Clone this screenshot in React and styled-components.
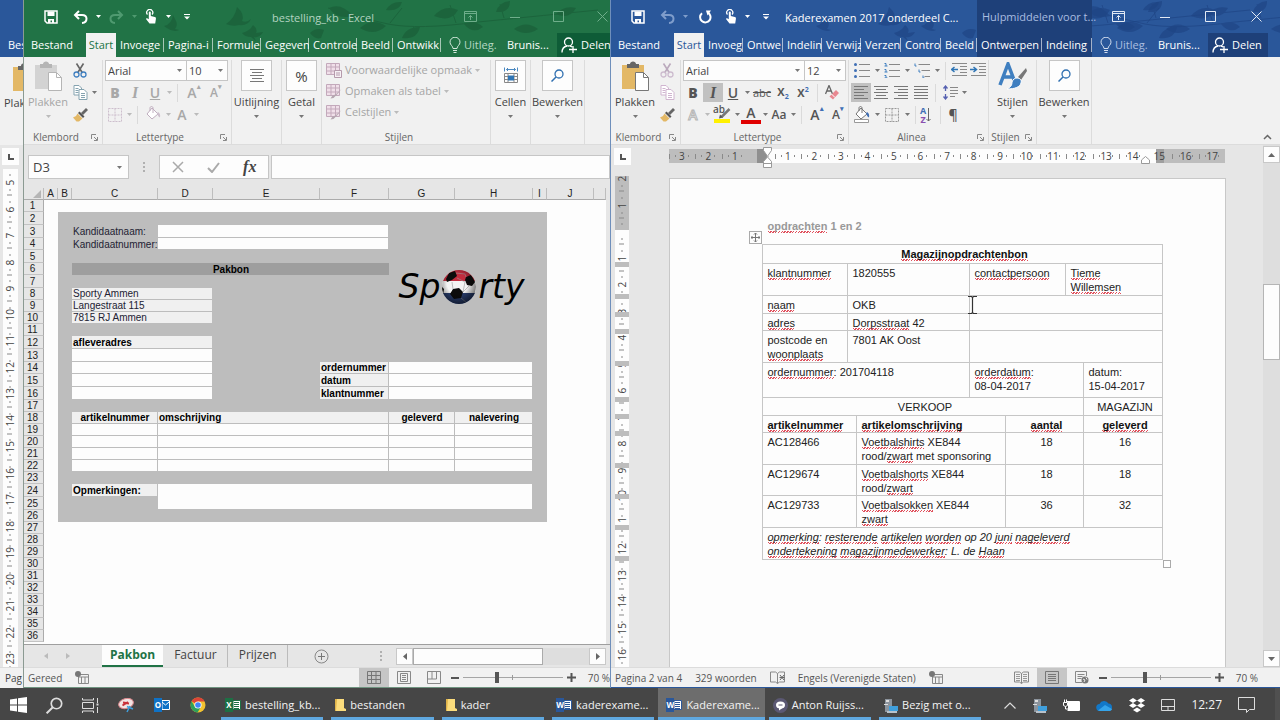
import React from 'react';
import styled, { createGlobalStyle, css } from 'styled-components';

const EXCEL = '#217346';
const WORD = '#2a579a';

/* ---------- data ---------- */

const excelTabs = [
	['Invoege', 48],
	['Pagina-i', 49],
	['Formule', 48],
	['Gegeven', 48],
	['Controle', 48],
	['Beeld', 36],
	['Ontwikk', 48],
];

const wordTabs = [
	['Invoeg', 39],
	['Ontwe', 40],
	['Indelin', 39],
	['Verwijz', 39],
	['Verzen', 40],
	['Contro', 40],
	['Beeld', 36],
];

const columns = [
	['A', 14],
	['B', 14],
	['C', 86],
	['D', 55],
	['E', 107],
	['F', 69],
	['G', 66],
	['H', 78],
	['I', 14],
	['J', 47],
];

// cells between column B and I: [kind, colSpan, text, options]
const sheetRows = {
	2: [['fill', 4], ['fill', 2, 'logo', { rows: 12 }]],
	3: [['fill', 1, 'Kandidaatnaam:'], ['box', 3]],
	4: [['fill', 1, 'Kandidaatnummer:'], ['box', 3]],
	5: [['fill', 4]],
	6: [['title', 4, 'Pakbon', { bold: true, center: true }]],
	7: [['fill', 4]],
	8: [['head', 2, 'Sporty Ammen'], ['fill', 2]],
	9: [['head', 2, 'Langestraat 115'], ['fill', 2]],
	10: [['head', 2, '7815 RJ Ammen'], ['fill', 2]],
	11: [['fill', 4]],
	12: [['head', 2, 'afleveradres', { bold: true }], ['fill', 2]],
	13: [['box', 2], ['fill', 2]],
	14: [['box', 2], ['fill', 1], ['head', 1, 'ordernummer', { bold: true }], ['box', 2]],
	15: [['box', 2], ['fill', 1], ['head', 1, 'datum', { bold: true }], ['box', 2]],
	16: [['box', 2], ['fill', 1], ['head', 1, 'klantnummer', { bold: true }], ['box', 2]],
	17: [['fill', 6]],
	18: [
		['head', 1, 'artikelnummer', { bold: true, center: true }],
		['head', 3, 'omschrijving', { bold: true }],
		['head', 1, 'geleverd', { bold: true, center: true }],
		['head', 1, 'nalevering', { bold: true, center: true }],
	],
	19: [['box', 1], ['box', 3], ['box', 1], ['box', 1]],
	20: [['box', 1], ['box', 3], ['box', 1], ['box', 1]],
	21: [['box', 1], ['box', 3], ['box', 1], ['box', 1]],
	22: [['box', 1], ['box', 3], ['box', 1], ['box', 1]],
	23: [['fill', 6]],
	24: [['head', 1, 'Opmerkingen:', { bold: true }], ['box', 5, '', { rows: 2 }]],
	25: [['fill', 1]],
	26: [['fill', 6]],
};

const tallRows = [2, 3, 5, 7, 12, 13, 15, 16, 24, 25];

const rulerMarks = [262, 294, 312, 329, 361, 397, 414, 431, 463, 494, 525, 556];

/* ---------- icons ---------- */

const Svg = ({ w = 16, h = w, box, children, ...rest }) => (
	<svg width={w} height={h} viewBox={box || `0 0 ${w} ${h}`} fill='none' aria-hidden='true' {...rest}>
		{children}
	</svg>
);

const Caret = ({ color = '#777' }) => (
	<Svg w={5} h={3}>
		<path d='M0 0h5L2.5 3z' fill={color} />
	</Svg>
);

const SaveIcon = () => (
	<Svg w={14}>
		<path d='M1 1h12v12H3L1 11z' stroke='#fff' strokeWidth='1.5' />
		<path d='M3.5 1.500h7v4.500h-7zM4 9h6v4H8V10.500H6.500V13H4z' fill='#fff' />
	</Svg>
);

const UndoIcon = ({ color = '#fff', flip }) => (
	<Svg w={15} h={14} transform={flip ? 'scale(-1 1)' : undefined}>
		<path d='M6 1 2 5l4 4M2.500 5H9c6 0 6 7.500 0 8' stroke={color} strokeWidth='2' />
	</Svg>
);

const RedoIcon = () => (
	<Svg w={14}>
		<path d='M4 3.200A5.200 5.200 0 1 0 9.500 2.500' stroke='#fff' strokeWidth='2' />
		<path d='M8 .5h5l-3.500 5z' fill='#fff' />
	</Svg>
);

const TouchIcon = () => (
	<Svg w={12} h={15}>
		<path d='M2.500 5.500a3 3 0 1 1 4.500 0' stroke='#fff' strokeWidth='1.300' />
		<path d='M3.800 3.500c0-1.300 2-1.300 2 0V7l4 1c1.200.4 1.200 1 1.100 2l-.7 4.500H4.500L1 10c0-1.300 1.500-1 2.800.3z' fill='#fff' />
	</Svg>
);

const CustomizeIcon = () => (
	<Svg w={6} h={6}>
		<path d='M0 .5h6' stroke='#fff' />
		<path d='M0 2.500h6l-3 3z' fill='#fff' />
	</Svg>
);

const WindowIcons = ({ color }) => (
	<>
		<WindowButton aria-label='Lintweergave'>
			<Svg w={13} h={11}>
				<path d='M.5.5h12v10H.5zM.5 2.500h12M6.500 9V4.500M4.500 6.500l2-2 2 2' stroke={color} />
			</Svg>
		</WindowButton>
		<WindowButton aria-label='Minimaliseren'>
			<Svg w={10} h={10}>
				<path d='M0 5.500h10' stroke={color} />
			</Svg>
		</WindowButton>
		<WindowButton aria-label='Maximaliseren'>
			<Svg w={11} h={11}>
				<path d='M.5.500h10v10H.5z' stroke={color} />
			</Svg>
		</WindowButton>
		<WindowButton aria-label='Sluiten'>
			<Svg w={11} h={11}>
				<path d='m.5.5 10 10M10.500.5l-10 10' stroke={color} />
			</Svg>
		</WindowButton>
	</>
);

const BulbIcon = ({ color }) => (
	<Svg w={12} h={16}>
		<path d='M4 11.500C4 9 1 8 1 5.200a5 5 0 0 1 10 0C11 8 8 9 8 11.500zM4 13.500h4M4.500 15.500h3' stroke={color} />
	</Svg>
);

const ShareIcon = () => (
	<Svg w={16}>
		<circle cx='7.500' cy='5' r='4' stroke='#fff' strokeWidth='1.300' />
		<path d='M1 15.500c0-4 2.500-6 5-6.500M9 9c1 .2 1.500.6 2 1M8 12.500h8M12 9v7' stroke='#fff' strokeWidth='1.300' />
	</Svg>
);

const PasteIcon = ({ faded }) => (
	<Svg w={28} h={30}>
		<path d='M1 4h22v24H1z' fill={faded ? '#d3d3d3' : '#e3b866'} />
		<path d='M6 3h3c0-3.500 6-3.500 6 0h3v4H6z' fill={faded ? '#b5b5b5' : '#666'} />
		<path d='M14.500 11.500h8l5 5v13h-13z' fill='#fff' stroke={faded ? '#b5b5b5' : '#777'} />
		<path d='M22.500 11.500v5h5' stroke={faded ? '#b5b5b5' : '#777'} />
	</Svg>
);

const CutIcon = ({ faded }) => (
	<Svg w={14} h={15}>
		<path d='M3.500.5 9.500 10M10.500.5 4.500 10' stroke={faded ? '#bbaabd' : '#666'} strokeWidth='1.600' />
		<circle cx='3.500' cy='11.500' r='2.500' stroke={faded ? '#cdbccf' : '#3f7fc0'} strokeWidth='1.300' />
		<circle cx='10.500' cy='11.500' r='2.500' stroke={faded ? '#cdbccf' : '#3f7fc0'} strokeWidth='1.300' />
	</Svg>
);

const CopyIcon = ({ color }) => (
	<Svg w={15} h={15}>
		<path d='M1 .5h5l2.500 2.500v7H1z' fill='#fff' stroke={color} />
		<path d='M2.500 3.500h3M2.500 5.500h3M2.500 7.500h3' stroke={color} />
		<path d='M6 4.500h5l3 3v7H6z' fill='#fff' stroke={color} />
		<path d='M8 8.500h4M8 10.500h4M8 12.500h4' stroke={color} />
	</Svg>
);

const BrushIcon = () => (
	<Svg w={15} h={14}>
		<path d='m8 5 5-5 2 2-5 5z' fill='#666' />
		<path d='m6.500 3.500 5 5-1.500 1.500-5-5z' fill='#555' />
		<path d='m4.500 5.500 5 5L6 13.500H3.500L0 9.500 3 8z' fill='#e3b866' />
	</Svg>
);

const BordersIcon = ({ color }) => (
	<Svg w={14}>
		<path d='M.5.5h13v13H.5zM7 .5v13M.5 7h13' stroke={color} strokeDasharray='2 1' />
	</Svg>
);

const BucketIcon = ({ color, drop, bar }) => (
	<Svg w={16} h={17}>
		<path d='m7 2 6 6-6 5-5-5z' fill='#fff' stroke={color} />
		<path d='M5 5V2c0-2 3-2 3 0v5' stroke={color} />
		<path d='M13 6c2 1 2.500 3 2 5.500-2-.500-2-3-3-4z' fill={drop} />
		{bar && <path d='M.5 13.500h14v3H.5z' fill='#fff' stroke='#999' />}
	</Svg>
);

const LinesIcon = ({ rows, color = '#777', h = 14, w = 14 }) => (
	<Svg w={w} h={h}>
		{rows.map(([x1, x2], i) => (
			<path key={i} d={`M${x1} ${i * 3 + 0.5}H${x2}`} stroke={color} />
		))}
	</Svg>
);

const ListIcon = ({ kind }) => (
	<Svg w={16} h={15}>
		{[1.5, 7.5, 13.5].map((y, i) => (
			<React.Fragment key={y}>
				{kind === 'bullets' && <circle cx='1.500' cy={y} r='1.500' fill='#3f6fb5' />}
				{kind === 'numbers' && <path d={`M.5 ${y - 1}h1.500v2.500M.5 ${y + 1.5}h3`} stroke='#3f7fc0' />}
				{kind === 'levels' && <path d={`M${1 + i * 4} ${y - 1}v2.500h1.500`} stroke='#3f7fc0' />}
				<path d={`M${kind === 'levels' ? 4.5 + i * 3 : 5} ${y}H16`} stroke='#888' />
			</React.Fragment>
		))}
	</Svg>
);

const IndentIcon = ({ right }) => (
	<Svg w={16} h={15}>
		<path d='M1 .5h15M9 3.500h7M9 6.500h7M9 9.500h7M1 12.500h15' stroke='#8a8a8a' />
		<path d={right ? 'M0 6.500h6M3.500 4l3 2.500-3 2.500' : 'M1 6.500h6M3.500 4l-3 2.500 3 2.500'} stroke='#2f75b5' strokeWidth='1.500' />
	</Svg>
);

const SpacingIcon = () => (
	<Svg w={15} h={15}>
		<path d='M2.500 1v5M.5 3.500l2-2.500 2 2.500M2.500 9v5M.5 11.500l2 2.500 2-2.500' stroke='#5560b0' strokeWidth='1.300' />
		<path d='M7 2.500h8M7 5.500h8M7 8.500h8M7 11.500h5' stroke='#888' />
	</Svg>
);

const EraserIcon = () => (
	<Svg w={14} h={15}>
		<path d='M.5 9 4 .500 7.500 9M2 6h4' stroke='#666' strokeWidth='1.300' />
		<path d='m11 5 3 3-6 6.500-3.500-3z' fill='#e88790' />
		<path d='m6.500 9 3.500 3.500' stroke='#fff' />
	</Svg>
);

const MarkerPen = () => (
	<Svg w={17} h={17}>
		<path d='m15.500 3-8 8' stroke='#777' strokeWidth='2.500' />
		<path d='m5 12.500 4-1-3-3z' fill='#555' />
		<path d='M0 13h16v4H0z' fill='#fff100' />
	</Svg>
);

const StyleRowIcon = ({ pen }) => (
	<Svg w={16} h={15}>
		<path d='M.5.5h13v11H.5z' fill='#f0dfe9' stroke='#c3a9bb' />
		<path d='M.5 4h13M.5 8h13M5 .5v11M9.500.5v11' stroke='#c3a9bb' />
		{pen ? (
			<path d='m15.500 5-5 6-3 3-3 .5 2-3 3-1z' fill='#b5a6b0' />
		) : (
			<path d='M8.500 7.500h7v7h-7zM10 10h4M10 12h4' fill='#f6f0f4' stroke='#b59aac' />
		)}
	</Svg>
);

const MagnifierIcon = ({ color = '#2f6fb0', size = 13 }) => (
	<Svg w={size} box='0 0 13 13'>
		<circle cx='8' cy='5' r='4' stroke={color} strokeWidth='1.300' />
		<path d='m5 8-4.500 4.500' stroke={color} strokeWidth='1.500' />
	</Svg>
);

const CellsIcon = () => (
	<Svg w={16} h={17}>
		<path d='M1.500.5v4M14.500.5v4M3.500 2.500h9M5 1 3.500 2.500 5 4M11 1l1.500 1.500L11 4' stroke='#4a88c0' />
		<path d='M1.500 6.500h13v9h-13zM1.500 9.500h13M1.500 12.500h13M5 6.500v9M11 6.500v9' stroke='#888' />
		<path d='M5 8.500h6v5H5z' fill='#2f75b5' />
	</Svg>
);

const StylesIcon = () => (
	<Svg w={30} h={28}>
		<path d='M2 23 10 2l8 21M5 15h10' stroke='#3f7fc0' strokeWidth='3.500' />
		<path d='m28 6-8 9 3 3 6-9z' fill='#777' />
		<path d='M19 16c3 0 5 2 4 5-1 4-6 6-14 6 4-2 5-4 5-7 1-3 3-4 5-4z' fill='#3f7fc0' stroke='#fff' />
	</Svg>
);

const LauncherIcon = ({ color = '#888' }) => (
	<Svg w={7} h={7}>
		<path d='M.5 5V.5H5M3 3l3 3M6.500 3v3.500H3' stroke={color} />
	</Svg>
);

const MacroIcon = () => (
	<Svg w={14} h={13}>
		<path d='M3.500 3.500h10v9h-10zM3.500 6h10M6.500 6v6M10 6v6' stroke='#888' />
		<circle cx='3' cy='3' r='3' fill='#777' />
	</Svg>
);

const GridViewIcon = () => (
	<Svg w={14} h={13}>
		<path d='M.5.5h13v12H.5zM.5 4.500h13M.5 8.500h13M4.500.5v12M9 .5v12' stroke='#777' />
	</Svg>
);

const PageViewIcon = () => (
	<Svg w={14} h={13}>
		<path d='M.5.5h13v12H.5zM3.500 2.500h7v8h-7zM5 4.500h4M5 6.500h4M5 8.500h4' stroke='#888' />
	</Svg>
);

const BreakViewIcon = () => (
	<Svg w={14} h={13}>
		<path d='M.5.5h13v12H.5zM.5 8h9V.5M5 .5V8' stroke='#888' />
	</Svg>
);

const BookIcon = ({ mark }) => (
	<Svg w={15} h={13}>
		<path d='M.5 1h5l2 1.500L9.500 1h5v10h-5l-2 1.500-2-1.500h-5zM7.500 2.500v10' stroke='#888' />
		{mark ? (
			<path d='m10 4 4 5M14 4l-4 5M9.500 6.500h5' stroke='#666' />
		) : (
			<path d='M2 3.500h4M2 5.500h4M2 7.500h4M2 9.500h4M9 3.500h4M9 5.500h4M9 7.500h4M9 9.500h4' stroke='#999' />
		)}
	</Svg>
);

const PrintViewIcon = () => (
	<Svg w={14} h={13}>
		<path d='M.5.5h13v12H.5zM3 3.500h8M3 5.500h8M3 7.500h8M3 9.500h8' stroke='#777' />
	</Svg>
);

const WebViewIcon = () => (
	<Svg w={14} h={13}>
		<path d='M7 11.500H.5V.5h11V5M2.500 3.500h7M2.500 5.500h5M2.500 7.500h4' stroke='#888' />
		<circle cx='10' cy='9' r='3.500' fill='#777' />
		<path d='m8 8 2 1-1 2M11 6.500l1 2' stroke='#eee' />
	</Svg>
);

const Football = () => (
	<Svg w={36} h={36}>
		<defs>
			<clipPath id='ball'>
				<circle cx='18' cy='18' r='17' />
			</clipPath>
			<radialGradient id='shade' cx='.45' cy='.4' r='.6'>
				<stop offset='.5' stopColor='#000' stopOpacity='0' />
				<stop offset='1' stopColor='#000' stopOpacity='.55' />
			</radialGradient>
		</defs>
		<g clipPath='url(#ball)'>
			<path d='M0 0h36v12H0z' fill='#c22c3e' />
			<path d='M0 12h36v12H0z' fill='#f4f4f4' />
			<path d='M0 24h36v12H0z' fill='#2a3f70' />
			<path d='m5 10 3-6 6-2 2 5-5 4-5 2zM25 8l5-2 4 7-3 4-5-1-2-5zM12 20l6-1 4 4-2 6-7 1-4-5zM0 17l3 3-1 6-3-2z' fill='#0c0c0c' />
			<path d='m16 9 8 4-2 10M11 13l1 7M15 4l9 1 1 3M22 23l7-7M20 29l6 5' stroke='#999' strokeWidth='.6' />
			<circle cx='18' cy='18' r='17' fill='url(#shade)' />
		</g>
	</Svg>
);

const WindowsLogo = () => (
	<Svg w={17} h={16}>
		<path d='M0 2.500 7 1.500v6H0zM8 1.300 17 0v7.500H8zM0 8.500h7v6l-7-1zM8 8.500h9V16l-9-1.300z' fill='#fff' />
	</Svg>
);

const TaskViewIcon = () => (
	<Svg w={17} h={15}>
		<path d='M.5 4.500h11v6H.5zM.5 0v2h11V0M.5 15v-2h11v2M15.500 0v5M15.500 9v6' stroke='#ddd' />
		<path d='M14.500 5.500h2v2h-2z' fill='#ddd' />
	</Svg>
);

const SnipIcon = () => (
	<Svg w={16} h={15}>
		<ellipse cx='8' cy='5.500' rx='7.500' ry='5' fill='#f2e4e4' stroke='#d9888c' transform='rotate(-15 8 5.500)' />
		<path d='M4.500 7.500 10 4M5 4.500l6 1' stroke='#c9303a' strokeWidth='2' />
		<path d='M9 8.500 15 11M9 14l3-6' stroke='#3f9fdc' strokeWidth='1.500' />
	</Svg>
);

const LetterIcon = ({ letter, color, accent, mail }) => (
	<LetterBox $color={color}>
		<b>{letter}</b>
		<Svg w={8} h={12}>
			<path d='M0 1.500h7.500v9H0z' fill={mail ? accent : '#fff'} stroke={mail ? '#fff' : color} />
			{mail ? (
				<path d='m0 3 3.500 3L7 3' stroke='#fff' />
			) : (
				<path d='M1 3.500h5M1 5.500h5M1 7.500h5M1 9.500h5' stroke={color} />
			)}
		</Svg>
	</LetterBox>
);

const ChromeIcon = () => (
	<Svg w={16}>
		<circle cx='8' cy='8' r='7.500' fill='#f2c230' />
		<path d='M8 8 1.500 4.250A7.500 7.500 0 0 1 14.700 4.500H8z' fill='#dc4437' />
		<path d='M1.500 4.250A7.500 7.500 0 0 0 7.500 15.500L11 9.800 8 8 4.800 9.500z' fill='#2da05a' />
		<circle cx='8' cy='8' r='3.600' fill='#fff' />
		<circle cx='8' cy='8' r='2.800' fill='#4285f4' />
	</Svg>
);

const FolderIcon = () => (
	<Svg w={11} h={14}>
		<path d='M0 1h5v12H0z' fill='#e0b44a' />
		<path d='M2 1h7v9l2 1v2H1z' fill='#fbdc7c' />
	</Svg>
);

const ChatIcon = () => (
	<Svg w={15}>
		<circle cx='7.500' cy='7.500' r='7.500' fill='#5b5873' />
		<ellipse cx='7.500' cy='7' rx='4.500' ry='3.500' fill='#fff' />
		<path d='M6 9.500v3l3.500-2.500z' fill='#fff' />
		<path d='M5.500 7h4' stroke='#5b5873' />
	</Svg>
);

const DeviceIcon = () => (
	<Svg w={15} h={15}>
		<path d='M2 1h7v13H2z' fill='#8b939c' />
		<path d='M3 2h3v2H3zM1 6h4v1H1z' fill='#ddd' />
		<path d='M6 8h9v5H6z' fill='#3f9fdc' />
		<path d='M4 13h10v2H4z' fill='#b8c2cb' />
	</Svg>
);

const BatteryIcon = () => (
	<Svg w={17} h={12}>
		<path d='M5 3h11v8H5z' fill='#fff' />
		<path d='M4 2.500h12.500v9h-12M16.500 5v4M.5 3.500h4v3l-2 1-2-1zM1.500 3V.5M3.500 3V.5M2.500 7.500V10H5' stroke='#fff' />
	</Svg>
);

const CloudIcon = () => (
	<Svg w={17} h={11}>
		<path d='M4 11a3.500 3.500 0 0 1-.5-7A5 5 0 0 1 12.500 3.500 3.800 3.800 0 0 1 13 11z' fill='#1278c8' />
		<path d='M2 10.500 9 5l7 4c-.5 1.500-1.500 2-3 2H4z' fill='#35a4ea' />
	</Svg>
);

const DropboxIcon = () => (
	<Svg w={16} h={15}>
		<path d='m4 0 4 2.500L4 5 0 2.500zM12 0l4 2.500L12 5 8 2.500zM4 5l4 2.500L4 10 0 7.500zM12 5l4 2.500L12 10 8 7.500zM8 9.500l4 2.500-4 2.500L4 12z' fill='#fff' />
	</Svg>
);

// leaves and birds printed on the title bar
const Foliage = ({ color, ...rest }) => (
	<FoliageSvg viewBox='0 0 440 57' aria-hidden='true' {...rest}>
		<g fill={color}>
			<path d='M0 26q8-2 9-11l3 6q2 4-1 8l4 1q-6 3-15-4z' />
			<path d='M62 24q9-6 11-17 8 7 5 14 5 2 9-2-3 7-12 6-6 2-13-1z' />
			<path d='M78 33q8-2 11-8 5 4 3 8l7-1q-3 6-9 5l2 4-5-4q-6 0-9-4z' />
			<path d='M146 33q6-6 14-3l-3 8q-6 2-11-5zM165 8q12-6 24 8-16 4-24-8zM196 28q12-11 26-2-12 11-26 2zM222 10q5-9 16-8-3 10-16 8zM238 38q4-11 18-11-3 13-18 11zM270 16q10-12 24-6-7 13-24 6z' />
			<path d='M300 24q12-4 19 3-10 8-19-3zM332 12q3-10 14-11 0 12-14 11zM350 29q12-9 24 0-12 8-24 0zM392 14q8-9 20-6-7 12-20 6z' />
		</g>
		<path d='M164 8q30 10 60 16t90-2q40-4 120-12M226 23l12-15M250 27l-8 10M292 23l-6-18M340 18l-4-14' stroke={color} fill='none' />
	</FoliageSvg>
);

/* ---------- shared ribbon parts ---------- */

const BigButton = ({ icon, label, faded, boxed }) => (
	<Big $faded={faded}>
		<BigIcon $boxed={boxed}>{icon}</BigIcon>
		<span>{label}</span>
		<Caret color={faded ? '#bbb' : '#777'} />
	</Big>
);

const FontPicker = ({ size, widths }) => (
	<ToolRow>
		<Picker $width={widths[0]}>
			<select aria-label='Lettertype' defaultValue='Arial'>
				<option>Arial</option>
			</select>
			<Caret />
		</Picker>
		<Picker $width={widths[1]}>
			<select aria-label='Tekengrootte' defaultValue={size}>
				<option>{size}</option>
			</select>
			<Caret />
		</Picker>
	</ToolRow>
);

const Group = ({ width, label, launcher, children }) => (
	<GroupBox $width={width}>
		<GroupBody>{children}</GroupBody>
		<GroupLabel>
			<span>{label}</span>
			{launcher && (
				<Launcher aria-label={`${label} instellingen`}>
					<LauncherIcon />
				</Launcher>
			)}
		</GroupLabel>
	</GroupBox>
);

const Zoom = () => (
	<ZoomBox>
		<Svg w={8} h={8}>
			<path d='M0 4h8' stroke='#555' strokeWidth='2' />
		</Svg>
		<input type='range' aria-label='Zoomen' defaultValue='34' />
		<Svg w={9} h={9}>
			<path d='M0 4.500h9M4.500 0v9' stroke='#555' strokeWidth='2' />
		</Svg>
		<span>70 %</span>
	</ZoomBox>
);

/* ---------- Excel ---------- */

function ExcelRibbon() {
	return (
		<Ribbon>
			<Group width={79} label='Klembord' launcher>
				<BigButton icon={<PasteIcon faded />} label='Plakken' faded />
				<ToolColumn>
					<ToolRow>
						<Tool $width={20} aria-label='Knippen'><CutIcon /></Tool>
					</ToolRow>
					<ToolRow>
						<Tool $width={20} aria-label='Kopiëren'><CopyIcon color='#85a3b0' /></Tool>
						<Tool $width={8} aria-label='Kopieeropties'><Caret /></Tool>
					</ToolRow>
					<ToolRow>
						<Tool $width={20} aria-label='Opmaak kopiëren'><BrushIcon /></Tool>
					</ToolRow>
				</ToolColumn>
			</Group>
			<Group width={129} label='Lettertype' launcher>
				<ToolColumn>
					<FontPicker size='10' widths={[82, 41]} />
					<ToolRow>
						<Tool $width={20} $faded><b>B</b></Tool>
						<Tool $width={20} $faded><Serif>I</Serif></Tool>
						<Tool $width={20} $faded><u>U</u></Tool>
						<Tool $width={8} aria-label='Onderstreping'><Caret color='#bbb' /></Tool>
						<Divider />
						<Tool $width={24} $faded>A<sup>▴</sup></Tool>
						<Tool $width={20} $faded $small>A<sup>▾</sup></Tool>
					</ToolRow>
					<ToolRow>
						<Tool $width={20} aria-label='Randen'><BordersIcon color='#cdbfcd' /></Tool>
						<Tool $width={8} aria-label='Randopties'><Caret color='#bbb' /></Tool>
						<Divider />
						<Tool $width={22} aria-label='Opvulkleur'><BucketIcon color='#c0aebf' drop='#cdbfcd' /></Tool>
						<Tool $width={8} aria-label='Kleuropties'><Caret color='#bbb' /></Tool>
						<Tool $width={20} $faded>A</Tool>
						<Tool $width={8} aria-label='Tekstkleur'><Caret color='#bbb' /></Tool>
					</ToolRow>
				</ToolColumn>
			</Group>
			<Group width={50}>
				<BigButton boxed icon={<LinesIcon h={14} rows={[[0, 14], [2, 12], [0, 14], [2, 12], [0, 14]]} />} label='Uitlijning' />
			</Group>
			<Group width={40}>
				<BigButton boxed icon='%' label='Getal' />
			</Group>
			<Group width={169} label='Stijlen'>
				<ToolColumn>
					<StyleButton><StyleRowIcon />Voorwaardelijke opmaak<Caret color='#bbb' /></StyleButton>
					<StyleButton><StyleRowIcon pen />Opmaken als tabel<Caret color='#bbb' /></StyleButton>
					<StyleButton><StyleRowIcon pen />Celstijlen<Caret color='#bbb' /></StyleButton>
				</ToolColumn>
			</Group>
			<Group width={40}>
				<BigButton boxed icon={<CellsIcon />} label='Cellen' />
			</Group>
			<Group width={54}>
				<BigButton boxed icon={<MagnifierIcon />} label='Bewerken' />
			</Group>
		</Ribbon>
	);
}

function Sheet() {
	const rows = Array.from({ length: 36 }, (_, i) => i + 1);

	return (
		<SheetTable>
			<colgroup>
				<col width='20' />
				{columns.map(([name, width]) => (
					<col key={name} width={width} />
				))}
				<col />
			</colgroup>
			<thead>
				<tr>
					<HeadCell>
						<Svg w={8} h={8}>
							<path d='M8 0v8H0z' fill='#b5b5b5' />
						</Svg>
					</HeadCell>
					{columns.map(([name]) => (
						<HeadCell key={name}>{name}</HeadCell>
					))}
					<HeadCell />
				</tr>
			</thead>
			<tbody>
				{rows.map((row) => (
					<SheetRow key={row} $tall={tallRows.includes(row)}>
						<RowHead>{row}</RowHead>
						{sheetRows[row] ? (
							<>
								<Cell />
								<Cell $kind='fill' />
								{sheetRows[row].map(([kind, span, text, opt = {}], i) => (
									<Cell key={i} $kind={kind} colSpan={span} rowSpan={opt.rows} $bold={opt.bold} $center={opt.center}>
										{text === 'logo' ? (
											<Logo>
												<span>Sp</span>
												<Football />
												<span>rty</span>
											</Logo>
										) : (
											text
										)}
									</Cell>
								))}
								<Cell $kind='fill' />
								<Cell colSpan={2} />
							</>
						) : (
							<Cell colSpan={11} />
						)}
					</SheetRow>
				))}
			</tbody>
		</SheetTable>
	);
}

function Excel() {
	return (
		<ExcelWindow>
			<Header $color={EXCEL}>
				<Foliage color='#1a5f39' style={{ left: 140 }} />
				<TitleRow>
					<QuickAccess>
						<QuickButton $width={30} aria-label='Opslaan'><SaveIcon /></QuickButton>
						<QuickButton $width={28} aria-label='Ongedaan maken'><UndoIcon /></QuickButton>
						<QuickButton $width={8} aria-label='Geschiedenis'><Caret color='#fff' /></QuickButton>
						<QuickButton $width={28} aria-label='Opnieuw'><UndoIcon flip color='#4f9a70' /></QuickButton>
						<QuickButton $width={8} aria-label='Opnieuw opties'><Caret color='#4f9a70' /></QuickButton>
						<QuickButton $width={26} aria-label='Aanraakmodus'><TouchIcon /></QuickButton>
						<QuickButton $width={8} aria-label='Modus'><Caret color='#fff' /></QuickButton>
						<QuickButton $width={30} aria-label='Aanpassen'><CustomizeIcon /></QuickButton>
					</QuickAccess>
					<ExcelTitle>bestelling_kb - Excel</ExcelTitle>
					<WindowButtons $gap={33}>
						<WindowIcons color='#6fae8b' />
					</WindowButtons>
				</TitleRow>
				<TabRow>
					<FileTab>Bestand</FileTab>
					<StartTab $color={EXCEL}>Start</StartTab>
					{excelTabs.map(([name, width]) => (
						<Tab key={name} $width={width}>{name}</Tab>
					))}
					<Hint $color='#b5d8c4'><BulbIcon color='#d3e8dc' />Uitleg.</Hint>
					<Account>Brunis...</Account>
					<Share $color='#0e5c37'><ShareIcon />Delen</Share>
				</TabRow>
			</Header>
			<ExcelRibbon />
			<FormulaBar>
				<NameBox>
					<input aria-label='Naamvak' defaultValue='D3' />
					<Caret />
				</NameBox>
				<Dots><i /><i /><i /></Dots>
				<FormulaButtons>
					<button aria-label='Annuleren'>
						<Svg w={12} h={12}><path d='m1 1 10 10M11 1 1 11' stroke='#aaa' strokeWidth='1.500' /></Svg>
					</button>
					<button aria-label='Invoeren'>
						<Svg w={13} h={11}><path d='m1 6 4 4 7-9' stroke='#aaa' strokeWidth='2' /></Svg>
					</button>
					<button aria-label='Functie invoegen'><Serif>fx</Serif></button>
				</FormulaButtons>
				<FormulaInput aria-label='Formule' />
			</FormulaBar>
			<SheetArea>
				<Sheet />
			</SheetArea>
			<SheetTabs>
				<SheetNav>
					<Svg w={4} h={6}><path d='M4 0v6L0 3z' fill='#bbb' /></Svg>
					<Svg w={4} h={6}><path d='M0 0v6l4-3z' fill='#bbb' /></Svg>
				</SheetNav>
				<SheetTab $active>Pakbon</SheetTab>
				<SheetTab>Factuur</SheetTab>
				<SheetTab>Prijzen</SheetTab>
				<AddSheet aria-label='Nieuw blad'>
					<Svg w={15}><circle cx='7.500' cy='7.500' r='6.500' stroke='#888' /><path d='M4 7.500h7M7.500 4v7' stroke='#777' /></Svg>
				</AddSheet>
				<Dots><i /><i /><i /></Dots>
				<HScroll>
					<ScrollButton aria-label='Naar links'><Svg w={4} h={7}><path d='M4 0v7L0 3.500z' fill='#666' /></Svg></ScrollButton>
					<HThumb />
					<ScrollButton aria-label='Naar rechts'><Svg w={4} h={7}><path d='M0 0v7l4-3.500z' fill='#666' /></Svg></ScrollButton>
				</HScroll>
			</SheetTabs>
			<StatusBar>
				<span>Gereed</span>
				<MacroIcon />
				<Spring />
				<ViewButton $active aria-label='Normaal'><GridViewIcon /></ViewButton>
				<ViewButton aria-label='Pagina-indeling'><PageViewIcon /></ViewButton>
				<ViewButton aria-label='Pagina-eindevoorbeeld'><BreakViewIcon /></ViewButton>
				<Zoom />
			</StatusBar>
		</ExcelWindow>
	);
}

/* ---------- Word ---------- */

function WordRibbon() {
	return (
		<Ribbon>
			<Group width={70} label='Klembord' launcher>
				<BigButton icon={<PasteIcon />} label='Plakken' />
				<ToolColumn>
					<ToolRow>
						<Tool $width={20} aria-label='Knippen'><CutIcon faded /></Tool>
					</ToolRow>
					<ToolRow>
						<Tool $width={20} aria-label='Kopiëren'><CopyIcon color='#d0b5d0' /></Tool>
					</ToolRow>
					<ToolRow>
						<Tool $width={20} aria-label='Opmaak kopiëren'><BrushIcon /></Tool>
					</ToolRow>
				</ToolColumn>
			</Group>
			<Group width={168} label='Lettertype' launcher>
				<ToolColumn>
					<FontPicker size='12' widths={[122, 41]} />
					<ToolRow>
						<Tool $width={20}><b>B</b></Tool>
						<Tool $width={20} $pressed><Serif>I</Serif></Tool>
						<Tool $width={20}><u>U</u></Tool>
						<Tool $width={8} aria-label='Onderstreping'><Caret /></Tool>
						<Tool $width={22} $mini><s>abc</s></Tool>
						<Tool $width={20} $mini><b>X<sub>2</sub></b></Tool>
						<Tool $width={20} $mini><b>X<sup>2</sup></b></Tool>
						<Divider />
						<Tool $width={20} aria-label='Opmaak wissen'><EraserIcon /></Tool>
					</ToolRow>
					<ToolRow>
						<Tool $width={20} $outline>A</Tool>
						<Tool $width={8} aria-label='Teksteffecten'><Caret color='#bbb' /></Tool>
						<Tool $width={22} $stack><em>ab</em><MarkerPen /></Tool>
						<Tool $width={8} aria-label='Markeringskleur'><Caret /></Tool>
						<Tool $width={20} $bar='#e00000'>A</Tool>
						<Tool $width={8} aria-label='Tekstkleur'><Caret /></Tool>
						<Tool $width={20} $small>Aa</Tool>
						<Tool $width={8} aria-label='Hoofdletters'><Caret /></Tool>
						<Divider />
						<Tool $width={22}>A<sup>▴</sup></Tool>
						<Tool $width={20} $small>A<sup>▾</sup></Tool>
					</ToolRow>
				</ToolColumn>
			</Group>
			<Group width={140} label='Alinea' launcher>
				<ToolColumn>
					<ToolRow>
						<Tool $width={22} aria-label='Opsommingstekens'><ListIcon kind='bullets' /></Tool>
						<Tool $width={8} aria-label='Opsomming'><Caret /></Tool>
						<Tool $width={22} aria-label='Nummering'><ListIcon kind='numbers' /></Tool>
						<Tool $width={8} aria-label='Nummeringopties'><Caret /></Tool>
						<Tool $width={22} aria-label='Lijst met meerdere niveaus'><ListIcon kind='levels' /></Tool>
						<Tool $width={8} aria-label='Niveaus'><Caret /></Tool>
						<Divider />
						<Tool $width={18} aria-label='Inspringing verkleinen'><IndentIcon /></Tool>
						<Tool $width={20} aria-label='Inspringing vergroten'><IndentIcon right /></Tool>
					</ToolRow>
					<ToolRow>
						<Tool $width={20} $pressed aria-label='Links uitlijnen'><LinesIcon rows={[[0, 14], [0, 10], [0, 14], [0, 10], [0, 14]]} /></Tool>
						<Tool $width={20} aria-label='Centreren'><LinesIcon rows={[[0, 14], [2, 12], [0, 14], [2, 12], [0, 14]]} /></Tool>
						<Tool $width={20} aria-label='Rechts uitlijnen'><LinesIcon rows={[[0, 14], [4, 14], [0, 14], [4, 14], [0, 14]]} /></Tool>
						<Tool $width={20} aria-label='Uitvullen'><LinesIcon rows={[[0, 14], [0, 14], [0, 14], [0, 14], [0, 14]]} /></Tool>
						<Divider />
						<Tool $width={20} aria-label='Regelafstand'><SpacingIcon /></Tool>
						<Tool $width={8} aria-label='Afstand'><Caret /></Tool>
					</ToolRow>
					<ToolRow>
						<Tool $width={22} aria-label='Arcering'><BucketIcon color='#777' drop='#3f6fb5' bar /></Tool>
						<Tool $width={8} aria-label='Arceringsopties'><Caret /></Tool>
						<Tool $width={22} aria-label='Randen'><BordersIcon color='#999' /></Tool>
						<Tool $width={8} aria-label='Randopties'><Caret /></Tool>
						<Divider />
						<SortTool aria-label='Sorteren'>
							<span><b>A</b><b>Z</b></span>
							<Svg w={5} h={14}><path d='M2.500 0v13M.5 11l2 2 2-2' stroke='#666' /></Svg>
						</SortTool>
						<Divider />
						<Tool $width={16}>¶</Tool>
					</ToolRow>
				</ToolColumn>
			</Group>
			<Group width={48} label='Stijlen' launcher>
				<BigButton icon={<StylesIcon />} label='Stijlen' />
			</Group>
			<Group width={55}>
				<BigButton boxed icon={<MagnifierIcon />} label='Bewerken' />
			</Group>
			<Collapse aria-label='Lint samenvouwen'>
				<Svg w={9} h={6}><path d='m1 5 3.500-3.500L8 5' stroke='#666' strokeWidth='1.500' /></Svg>
			</Collapse>
		</Ribbon>
	);
}

function Document() {
	return (
		<Page>
			<Heading><Sp>opdrachten</Sp> 1 en 2</Heading>
			<TableFrame>
				<MoveHandle>
					<Svg w={9} h={9}><path d='M4.500 0v9M0 4.500h9M3 1.500l1.500-1.500L6 1.500M3 7.500 4.500 9 6 7.500M1.500 3 0 4.500 1.500 6M7.500 3 9 4.500 7.500 6' stroke='#777' /></Svg>
				</MoveHandle>
				<DocTable>
					<colgroup>
						<col width='85' />
						<col width='9' />
						<col width='113' />
						<col width='36' />
						<col width='60' />
						<col width='18' />
						<col />
					</colgroup>
					<tbody>
						<DocRow $height={19}>
							<DocHead colSpan={7}><Sp>Magazijnopdrachtenbon</Sp></DocHead>
						</DocRow>
						<DocRow $height={32}>
							<td><Sp>klantnummer</Sp></td>
							<td colSpan={2}>1820555</td>
							<td colSpan={2}><Sp>contactpersoon</Sp></td>
							<td colSpan={2}><Sp>Tieme</Sp><br /><Sp>Willemsen</Sp></td>
						</DocRow>
						<DocRow $height={18}>
							<td><Sp>naam</Sp></td>
							<td colSpan={2}>OKB</td>
							<td colSpan={4}>
								<TextCursor w={9} h={18}>
									<path d='M0 .5h3.500l1 1 1-1H9M0 17.500h3.500l1-1 1 1H9M4.500 1.500v15' stroke='#333' strokeWidth='1.200' />
								</TextCursor>
							</td>
						</DocRow>
						<DocRow $height={17}>
							<td><Sp>adres</Sp></td>
							<td colSpan={2}><Sp>Dorpsstraat</Sp> 42</td>
							<td colSpan={4} />
						</DocRow>
						<DocRow $height={32}>
							<td>postcode en <Sp>woonplaats</Sp></td>
							<td colSpan={2}>7801 AK Oost</td>
							<td colSpan={4} />
						</DocRow>
						<DocRow $height={35}>
							<td colSpan={3}><Sp>ordernummer</Sp>: 201704118</td>
							<td colSpan={3}><Sp>orderdatum</Sp>:<br />08-04-2017</td>
							<td>datum:<br />15-04-2017</td>
						</DocRow>
						<DocRow $height={18}>
							<Centered colSpan={6}>VERKOOP</Centered>
							<Centered>MAGAZIJN</Centered>
						</DocRow>
						<DocRow $height={17}>
							<DocHead colSpan={2} $left><Sp>artikelnummer</Sp></DocHead>
							<DocHead colSpan={2} $left><Sp>artikelomschrijving</Sp></DocHead>
							<DocHead colSpan={2}><Sp>aantal</Sp></DocHead>
							<DocHead><Sp>geleverd</Sp></DocHead>
						</DocRow>
						<DocRow $height={32}>
							<td colSpan={2}>AC128466</td>
							<td colSpan={2}><Sp>Voetbalshirts</Sp> XE844<br />rood/<Sp>zwart</Sp> met sponsoring</td>
							<Centered colSpan={2}>18</Centered>
							<Centered>16</Centered>
						</DocRow>
						<DocRow $height={31}>
							<td colSpan={2}>AC129674</td>
							<td colSpan={2}><Sp>Voetbalshorts</Sp> XE844<br />rood/<Sp>zwart</Sp></td>
							<Centered colSpan={2}>18</Centered>
							<Centered>18</Centered>
						</DocRow>
						<DocRow $height={32}>
							<td colSpan={2}>AC129733</td>
							<td colSpan={2}><Sp>Voetbalsokken</Sp> XE844<br /><Sp>zwart</Sp></td>
							<Centered colSpan={2}>36</Centered>
							<Centered>32</Centered>
						</DocRow>
						<DocRow $height={32}>
							<Remark colSpan={7}>
								<Sp>opmerking</Sp>: <Sp>resterende</Sp> <Sp>artikelen</Sp> <Sp>worden</Sp> op 20 <Sp>juni</Sp> <Sp>nageleverd</Sp><br />
								<Sp>ondertekening</Sp> <Sp>magazijnmedewerker</Sp>: L. de <Sp>Haan</Sp>
							</Remark>
						</DocRow>
					</tbody>
				</DocTable>
				<ResizeHandle />
			</TableFrame>
		</Page>
	);
}

function Word() {
	const units = [3, 2, 1, 0, ...Array.from({ length: 17 }, (_, i) => i + 1)];
	const vertical = [2, 1, 0, ...Array.from({ length: 17 }, (_, i) => i + 1)];

	return (
		<WordWindow>
			<Header $color={WORD}>
				<Foliage color='#1f4585' style={{ left: 205 }} />
				<Foliage color='#1f4585' style={{ left: 310 }} />
				<WordTitleRow>
					<QuickAccess>
						<QuickButton $width={30} aria-label='Opslaan'><SaveIcon /></QuickButton>
						<QuickButton $width={28} aria-label='Ongedaan maken'><UndoIcon color='#7f9dcb' /></QuickButton>
						<QuickButton $width={8} aria-label='Geschiedenis'><Caret color='#7f9dcb' /></QuickButton>
						<QuickButton $width={32} aria-label='Herhalen'><RedoIcon /></QuickButton>
						<QuickButton $width={20} aria-label='Aanraakmodus'><TouchIcon /></QuickButton>
						<QuickButton $width={12} aria-label='Modus'><Caret color='#fff' /></QuickButton>
						<QuickButton $width={26} aria-label='Aanpassen'><CustomizeIcon /></QuickButton>
						<WordTitle>Kaderexamen 2017 onderdeel C...</WordTitle>
					</QuickAccess>
					<Context>Hulpmiddelen voor t...</Context>
					<WindowButtons $gap={35}>
						<WindowIcons color='#e3eaf5' />
					</WindowButtons>
				</WordTitleRow>
				<TabRow>
					<FileTab $wide>Bestand</FileTab>
					<StartTab $color={WORD}>Start</StartTab>
					{wordTabs.map(([name, width]) => (
						<Tab key={name} $width={width}>{name}</Tab>
					))}
					<Tab $width={65} $dark>Ontwerpen</Tab>
					<Tab $width={50} $dark>Indeling</Tab>
					<Hint $color='#aabfe0'><BulbIcon color='#d3deef' />Uitleg.</Hint>
					<Account>Brunis...</Account>
					<Share $color='#1e4079'><ShareIcon />Delen</Share>
				</TabRow>
			</Header>
			<WordRibbon />
			<WordBody>
				<RulerLine>
					<TabSelector aria-label='Tabstop'>
						<Svg w={6} h={6}><path d='M1 0v5h5' stroke='#555' strokeWidth='2' /></Svg>
					</TabSelector>
					<Ruler>
						{units.map((n, i) => (
							<RulerUnit key={i} $gray={i < 3 || i > 18} $half={i === 3 ? 'left' : i === 18 ? 'right' : ''}>
								{n || ''}
							</RulerUnit>
						))}
						<Indents>
							<Svg w={9} h={22}>
								<path d='M.5.5h8v3L5 8.500v2l3.500 4v6h-8v-6l3.500-4v-2L.5 3.500zM.5 16.500h8' fill='#fff' stroke='#999' />
							</Svg>
						</Indents>
						<RightIndent>
							<Svg w={9} h={8}><path d='M.5 7.500V4l4-3.500 4 3.500v3.500z' fill='#fff' stroke='#999' /></Svg>
						</RightIndent>
					</Ruler>
				</RulerLine>
				<DocArea>
					<VRuler>
						{vertical.map((n, i) => (
							<VUnit key={i}>{n || ''}</VUnit>
						))}
						{rulerMarks.map((y) => (
							<RowMark key={y} style={{ top: y - 176 }} />
						))}
					</VRuler>
					<Canvas>
						<Document />
					</Canvas>
				</DocArea>
				<VScroll>
					<ScrollButton $square aria-label='Omhoog'><Svg w={7} h={4}><path d='M0 4h7L3.500 0z' fill='#666' /></Svg></ScrollButton>
					<VTrack><VThumb /></VTrack>
					<ScrollButton $square aria-label='Omlaag'><Svg w={7} h={4}><path d='M0 0h7L3.500 4z' fill='#666' /></Svg></ScrollButton>
				</VScroll>
			</WordBody>
			<StatusBar $word>
				<span>Pagina 2 van 4</span>
				<span>329 woorden</span>
				<BookIcon mark />
				<span>Engels (Verenigde Staten)</span>
				<MacroIcon />
				<Spring />
				<ViewButton aria-label='Leesmodus'><BookIcon /></ViewButton>
				<ViewButton $active aria-label='Afdrukweergave'><PrintViewIcon /></ViewButton>
				<ViewButton aria-label='Weblay-out'><WebViewIcon /></ViewButton>
				<Zoom />
			</StatusBar>
		</WordWindow>
	);
}

/* ---------- window that sticks out behind Excel ---------- */

function BackWindow() {
	const units = Array.from({ length: 19 }, (_, i) => i + 5);

	return (
		<BackPane>
			<BackHeader>Bes</BackHeader>
			<BackRibbon>
				<PasteIcon />
				<span>Plak</span>
			</BackRibbon>
			<BackBody>
				<TabSelector aria-label='Tabstop'>
					<Svg w={6} h={6}><path d='M1 0v5h5' stroke='#555' strokeWidth='2' /></Svg>
				</TabSelector>
				<BackRuler>
					{units.map((n) => (
						<VUnit key={n}>{n}</VUnit>
					))}
				</BackRuler>
			</BackBody>
			<BackStatus>Pag</BackStatus>
		</BackPane>
	);
}

/* ---------- taskbar ---------- */

function Taskbar() {
	const excel = <LetterIcon letter='X' color='#1d7044' />;
	const word = <LetterIcon letter='W' color='#2a579a' />;
	const tasks = [
		['bestelling_kb...', excel],
		['bestanden', <FolderIcon />],
		['kader', <FolderIcon />],
		['kaderexame...', word],
		['Kaderexame...', word],
		['Anton Ruijss...', <ChatIcon />],
		['Bezig met o...', <DeviceIcon />],
	];

	return (
		<Bar>
			<Pinned>
				<PinButton aria-label='Start'><WindowsLogo /></PinButton>
				<PinButton aria-label='Zoeken'><MagnifierIcon color='#ddd' size={17} /></PinButton>
				<PinButton aria-label='Taakweergave'><TaskViewIcon /></PinButton>
				<PinButton aria-label='Knipprogramma'><SnipIcon /></PinButton>
				<PinButton aria-label='Outlook'><LetterIcon letter='O' color='#0f72c6' accent='#0f72c6' mail /></PinButton>
				<PinButton aria-label='Chrome'><ChromeIcon /></PinButton>
			</Pinned>
			<Tasks>
				{tasks.map(([name, icon], i) => (
					<Task key={name} $active={i === 4}>
						{icon}
						<span>{name}</span>
					</Task>
				))}
			</Tasks>
			<Tray>
				<Svg w={12} h={7}><path d='m.5 6.500 5.500-5.500 5.500 5.500' stroke='#ddd' strokeWidth='1.200' /></Svg>
				<DeviceIcon />
				<BatteryIcon />
				<CloudIcon />
				<DropboxIcon />
				<Svg w={14} h={12}><path d='M.5.5h13v11H.5zM.5 7.500h13M7 7.500v4' stroke='#ddd' /></Svg>
				<time>12:27</time>
				<Svg w={17} h={16}><path d='M.5.5h16v12h-5l-3 3v-3h-8z' stroke='#ddd' /></Svg>
			</Tray>
		</Bar>
	);
}

export default function App() {
	return (
		<>
			<GlobalStyle />
			<Desktop>
				<Workspace>
					<BackWindow />
					<Excel />
					<Word />
				</Workspace>
				<Taskbar />
			</Desktop>
		</>
	);
}

/* ---------- styles ---------- */

const ui = `'Open Sans', 'Noto Sans', sans-serif`;
const arial = `'Liberation Sans', Arial, sans-serif`;

const GlobalStyle = createGlobalStyle`
	* {
		box-sizing: border-box;
	}
	body {
		margin: 0;
		font-family: ${ui};
		font-size: 11px;
		line-height: 14px;
		color: #444;
		background: #464646;
	}
	button, input, select {
		margin: 0;
		padding: 0;
		border: 0;
		border-radius: 0;
		background: none;
		font: inherit;
		color: inherit;
	}
	svg {
		flex: none;
		display: block;
	}
`;

const Desktop = styled.div`
	display: flex;
	flex-direction: column;
	height: 100vh;
	overflow: hidden;
`;

const Workspace = styled.div`
	flex: 1;
	min-height: 0;
	display: grid;
	grid-template-columns: 23px minmax(0, 587fr) minmax(0, 670fr);
`;

const ExcelWindow = styled.section`
	display: flex;
	flex-direction: column;
	min-height: 0;
	overflow: hidden;
	border-left: 1px solid #8b9a92;
	background: #e6e6e6;
`;

const WordWindow = styled.section`
	display: flex;
	flex-direction: column;
	min-height: 0;
	overflow: hidden;
	border-left: 1px solid #6f8fbb;
	background: #e6e6e6;
`;

const Header = styled.header`
	position: relative;
	flex: none;
	overflow: hidden;
	color: #fff;
	background: ${(p) => p.$color};
`;

const FoliageSvg = styled.svg`
	position: absolute;
	top: 0;
	width: 440px;
	height: 57px;
	opacity: 0.7;
`;

const TitleRow = styled.div`
	position: relative;
	display: flex;
	align-items: center;
	height: 33px;
`;

const WordTitleRow = styled(TitleRow)`
	display: grid;
	grid-template-columns: 366px 115px 1fr;
`;

const QuickAccess = styled.div`
	display: flex;
	align-items: center;
	padding-left: 12px;
`;

const QuickButton = styled.button`
	display: flex;
	align-items: center;
	justify-content: center;
	width: ${(p) => p.$width}px;
	height: 30px;
`;

const ExcelTitle = styled.div`
	flex: 1;
	padding: 2px 0 0 70px;
	white-space: nowrap;
	color: #b3d4c1;
`;

const WordTitle = styled.div`
	padding: 2px 0 0 6px;
	white-space: nowrap;
`;

const Context = styled.div`
	align-self: stretch;
	padding: 10px 0 0 5px;
	white-space: nowrap;
	color: #a9bde0;
	background: #1e4079;
`;

const WindowButtons = styled.div`
	display: flex;
	justify-content: flex-end;
	gap: ${(p) => p.$gap}px;
	padding-right: ${(p) => (p.$gap > 34 ? 18 : 2)}px;
`;

const WindowButton = styled.button`
	display: flex;
	padding: 0;
	height: 33px;
	align-items: center;
`;

const TabRow = styled.nav`
	position: relative;
	display: flex;
	height: 24px;
	line-height: 24px;
`;

const FileTab = styled.button`
	flex: none;
	width: ${(p) => (p.$wide ? 63 : 62)}px;
	padding-left: 7px;
	text-align: left;
`;

const StartTab = styled.button`
	flex: none;
	width: 30px;
	text-align: center;
	color: ${(p) => p.$color};
	background: #f1f1f1;
`;

const Tab = styled.button`
	position: relative;
	flex: none;
	width: ${(p) => p.$width}px;
	padding-left: 4px;
	text-align: left;
	overflow: hidden;
	white-space: nowrap;
	background: ${(p) => (p.$dark ? '#1e4079' : 'none')};

	&::after {
		content: '';
		position: absolute;
		right: 0;
		top: 5px;
		height: 14px;
		border-right: 1px solid rgba(255, 255, 255, 0.6);
	}
`;

const Hint = styled.button`
	display: flex;
	flex: none;
	align-items: center;
	gap: 3px;
	width: 62px;
	padding-left: 8px;
	color: ${(p) => p.$color};
`;

const Account = styled.button`
	flex: none;
	width: 54px;
	padding-left: 4px;
	text-align: left;
`;

const Share = styled.button`
	display: flex;
	flex: none;
	align-items: center;
	gap: 4px;
	width: 60px;
	padding-left: 4px;
	background: ${(p) => p.$color};
`;

const Ribbon = styled.div`
	display: flex;
	flex: none;
	height: 88px;
	padding: 3px 0 0;
	background: #f1f1f1;
	border-bottom: 1px solid #dcdcdc;
`;

const GroupBox = styled.div`
	display: flex;
	flex: none;
	flex-direction: column;
	justify-content: space-between;
	width: ${(p) => p.$width}px;
	border-right: 1px solid #dcdcdc;
`;

const GroupBody = styled.div`
	display: flex;
	padding-left: 2px;
`;

const GroupLabel = styled.div`
	position: relative;
	height: 14px;
	padding-right: 14px;
	text-align: center;
	font-size: 10px;
	color: #666;
`;

const Launcher = styled.button`
	position: absolute;
	right: 4px;
	top: 4px;
`;

const Big = styled.button`
	display: flex;
	flex: none;
	flex-direction: column;
	align-items: center;
	gap: 4px;
	min-width: 44px;
	color: ${(p) => (p.$faded ? '#a5a5a5' : '#444')};

	svg:last-child {
		margin-top: 2px;
	}

	${GroupBody} > &:only-child {
		flex: 1;
		min-width: 0;
		margin-left: -2px;
	}
`;

const BigIcon = styled.span`
	display: flex;
	align-items: center;
	justify-content: center;
	height: 31px;
	width: 31px;
	font-size: 15px;

	${(p) =>
		p.$boxed &&
		css`
			background: #fdfdfd;
			border: 1px solid #c6c6c6;
		`}

	svg:last-child {
		margin-top: 0;
	}
`;

const ToolColumn = styled.div`
	display: flex;
	flex-direction: column;
	gap: 1px;
`;

const ToolRow = styled.div`
	display: flex;
	align-items: center;
	height: 21px;
`;

const Tool = styled.button`
	position: relative;
	display: flex;
	flex: none;
	align-items: center;
	justify-content: center;
	width: ${(p) => p.$width}px;
	height: 19px;
	font-size: ${(p) => (p.$mini ? 11 : p.$small ? 12 : 14)}px;
	font-weight: ${(p) => (p.$mini ? 400 : 600)};
	color: ${(p) => (p.$faded ? '#a8a8a8' : '#555')};
	background: ${(p) => (p.$pressed ? '#c1c1c1' : 'none')};

	sup, sub {
		font-size: 7px;
		line-height: 7px;
		color: ${(p) => (p.$faded ? '#a8a8a8' : '#3f6fb5')};
	}

	sup {
		align-self: flex-start;
	}

	${(p) =>
		p.$outline &&
		css`
			color: #f1f1f1;
			-webkit-text-stroke: 1px #b5b5b5;
		`}

	${(p) =>
		p.$bar &&
		css`
			line-height: 15px;
			padding-bottom: 4px;
			box-shadow: inset 0 -4px 0 ${p.$bar};
		`}

	${(p) =>
		p.$stack &&
		css`
			em {
				position: absolute;
				left: 2px;
				top: -1px;
				font-size: 10px;
				font-style: normal;
				line-height: 10px;
			}
		`}
`;

const Divider = styled.i`
	flex: none;
	width: 1px;
	height: 18px;
	margin: 0 4px;
	background: #dadada;
`;

const Serif = styled.i`
	font-family: 'Liberation Serif', serif;
	font-size: 16px;
	font-weight: 700;
`;

const Picker = styled.label`
	position: relative;
	width: ${(p) => p.$width}px;
	height: 21px;
	background: #fdfdfd;
	border: 1px solid #c6c6c6;

	& + & {
		border-left: 0;
	}

	select {
		width: 100%;
		height: 19px;
		padding-left: 2px;
		appearance: none;
	}

	svg {
		position: absolute;
		right: 4px;
		top: 8px;
	}
`;

const StyleButton = styled.button`
	display: flex;
	align-items: center;
	gap: 3px;
	height: 20px;
	padding-left: 2px;
	white-space: nowrap;
	color: #a5a5a5;
`;

const SortTool = styled.button`
	display: flex;
	align-items: center;
	width: 16px;
	font-size: 9px;
	color: #3f6fb5;

	span {
		display: flex;
		flex-direction: column;
	}

	b {
		line-height: 9px;
	}

	b + b {
		color: #8a4fb0;
	}
`;

const Collapse = styled.button`
	align-self: flex-end;
	margin: 0 8px 4px auto;
`;

const FormulaBar = styled.div`
	display: flex;
	flex: none;
	align-items: center;
	height: 43px;
	padding: 10px 4px 9px 4px;
`;

const NameBox = styled.label`
	position: relative;
	width: 101px;
	height: 24px;
	background: #fdfdfd;
	border: 1px solid #c6c6c6;

	input {
		width: 80px;
		height: 22px;
		padding-left: 4px;
		font-size: 13px;
	}

	svg {
		position: absolute;
		right: 6px;
		top: 10px;
	}
`;

const Dots = styled.span`
	display: flex;
	flex-direction: column;
	align-items: center;
	gap: 2px;
	width: 30px;

	i {
		width: 2px;
		height: 2px;
		background: #b0b0b0;
	}
`;

const FormulaButtons = styled.div`
	display: flex;
	justify-content: space-around;
	width: 110px;
	height: 24px;
	background: #fdfdfd;
	border: 1px solid #c6c6c6;

	button {
		display: flex;
		align-items: center;
	}
`;

const FormulaInput = styled.input`
	flex: 1;
	min-width: 0;
	height: 24px;
	margin: 0 -4px 0 2px;
	background: #fdfdfd;
	border: 1px solid #c6c6c6;
`;

const SheetArea = styled.div`
	flex: 1;
	min-height: 0;
	margin-right: 4px;
	overflow: hidden;
	background: #fdfdfd;
`;

const SheetTable = styled.table`
	width: 100%;
	table-layout: fixed;
	border-collapse: separate;
	border-spacing: 0;
	font-family: ${arial};
	font-size: 10px;
	line-height: 11px;
	color: #222;
`;

const HeadCell = styled.th`
	height: 12px;
	padding: 0;
	font-weight: 400;
	background: #e6e6e6;
	border-right: 1px solid #bdbdbd;
	border-bottom: 1px solid #ababab;

	svg {
		margin-left: 9px;
	}
`;

const SheetRow = styled.tr`
	height: ${(p) => (p.$tall ? 13 : 12)}px;
`;

const RowHead = styled.th`
	padding: 0 2px 0 0;
	font-weight: 400;
	background: #e6e6e6;
	border-right: 1px solid #ababab;
	border-bottom: 1px solid #c3c3c3;
`;

const fills = {
	fill: '#bdbdbd',
	box: '#fdfdfd',
	head: '#f0f0f0',
	title: '#9e9e9e',
};

const Cell = styled.td`
	padding: 0 0 0 1px;
	white-space: nowrap;
	text-align: ${(p) => (p.$center ? 'center' : 'left')};
	font-weight: ${(p) => (p.$bold ? 700 : 400)};
	color: ${(p) => (p.$bold ? '#000' : '#223')};
	background: ${(p) => fills[p.$kind] || '#fdfdfd'};

	${(p) =>
		(p.$kind === 'box' || p.$kind === 'head') &&
		css`
			border-right: 1px solid #bdbdbd;
			border-bottom: 1px solid #bdbdbd;
		`}
`;

const Logo = styled.div`
	display: flex;
	align-items: center;
	justify-content: center;
	gap: 1px;
	font-family: 'DejaVu Sans', ${ui};
	font-size: 33px;
	font-style: italic;
	font-weight: 200;
	line-height: 36px;
	color: #000;
`;

const SheetTabs = styled.div`
	display: flex;
	flex: none;
	align-items: center;
	height: 23px;
	padding-right: 4px;
	border-top: 1px solid #9f9f9f;
	font-size: 12px;
`;

const SheetNav = styled.div`
	display: flex;
	gap: 18px;
	width: 78px;
	padding-left: 20px;
`;

const SheetTab = styled.button`
	align-self: stretch;
	padding: 0 10px 2px 11px;
	border-right: 1px solid #bbb;

	${(p) =>
		p.$active &&
		css`
			padding: 0 8px;
			font-weight: 700;
			color: ${EXCEL};
			background: #fdfdfd;
			border-right: 0;
			border-bottom: 2px solid ${EXCEL};
		`}
`;

const AddSheet = styled.button`
	margin: 0 auto 0 26px;
`;

const HScroll = styled.div`
	display: flex;
	justify-content: space-between;
	width: 210px;
	height: 17px;
	background: #dedede;
`;

const ScrollButton = styled.button`
	display: flex;
	flex: none;
	align-items: center;
	justify-content: center;
	width: 17px;
	height: 17px;
	background: #fdfdfd;
	border: 1px solid #c8c8c8;
`;

const HThumb = styled.i`
	width: 130px;
	margin-right: auto;
	background: #fdfdfd;
	border: 1px solid #aaa;
`;

const StatusBar = styled.footer`
	display: flex;
	flex: none;
	align-items: center;
	gap: 13px;
	height: 21px;
	padding-left: 4px;
	font-size: 10px;
	white-space: nowrap;
	color: #555;
	background: #f1f1f1;
	border-top: 1px solid #dcdcdc;
	border-bottom: 1px solid ${(p) => (p.$word ? WORD : '#6f9480')};
	padding-right: ${(p) => (p.$word ? 22 : 0)}px;
`;

const Spring = styled.i`
	flex: 1;
`;

const ViewButton = styled.button`
	display: flex;
	align-items: center;
	justify-content: center;
	align-self: stretch;
	width: 30px;
	margin-right: -13px;
	background: ${(p) => (p.$active ? '#c6c6c6' : 'none')};
`;

const ZoomBox = styled.div`
	display: flex;
	align-items: center;
	gap: 4px;
	margin-left: 2px;

	input {
		width: 100px;
		height: 12px;
		appearance: none;
		background:
			linear-gradient(#999, #999) 50% 50% / 1px 5px no-repeat,
			linear-gradient(#a5a5a5, #a5a5a5) 0 50% / 100% 1px no-repeat;
	}

	input::-webkit-slider-thumb {
		appearance: none;
		width: 4px;
		height: 11px;
		background: #555;
	}

	span {
		margin-left: 8px;
	}
`;

const WordBody = styled.div`
	flex: 1;
	min-height: 0;
	display: grid;
	grid-template-columns: minmax(0, 1fr) 17px;
	grid-template-rows: 31px minmax(0, 1fr);
`;

const RulerLine = styled.div`
	display: grid;
	grid-template-columns: 20px minmax(0, 1fr);
	padding-top: 3px;
`;

const TabSelector = styled.button`
	display: flex;
	flex: none;
	align-items: center;
	justify-content: center;
	width: 17px;
	height: 17px;
	margin-left: 3px;
	background: #fdfdfd;
`;

const Ruler = styled.div`
	position: relative;
	display: grid;
	grid-template-columns: repeat(21, 1fr);
	width: 100%;
	max-width: 557px;
	height: 14px;
	margin: 1px auto;
`;

const ticks = '#8a8a8a';

const RulerUnit = styled.span`
	text-align: center;
	font-size: 10px;
	line-height: 14px;
	background:
		linear-gradient(${ticks}, ${ticks}) 0 50% / 1px 5px no-repeat,
		linear-gradient(${ticks}, ${ticks}) 25% 50% / 1px 2px no-repeat,
		linear-gradient(${ticks}, ${ticks}) 75% 50% / 1px 2px no-repeat;
	background-color: ${(p) => (p.$gray ? '#bdbdbd' : '#fdfdfd')};

	${(p) =>
		p.$half === 'left' &&
		css`
			background: linear-gradient(to right, #bdbdbd 35%, #8f8f8f 35%, #8f8f8f 70%, #fdfdfd 70%);
		`}

	${(p) =>
		p.$half === 'right' &&
		css`
			background: linear-gradient(to right, #fdfdfd 40%, #9f9f9f 40%, #9f9f9f 70%, #bdbdbd 70%);
		`}
`;

const Indents = styled.span`
	position: absolute;
	left: 94px;
	top: -2px;
`;

const RightIndent = styled.span`
	position: absolute;
	right: 76px;
	top: 7px;
`;

const DocArea = styled.div`
	grid-row: 2;
	display: grid;
	grid-template-columns: 20px minmax(0, 1fr);
	min-height: 0;
	overflow: hidden;
`;

const VRuler = styled.div`
	position: relative;
	display: flex;
	flex-direction: column;
	width: 14px;
	margin-left: 4px;
	overflow: hidden;
	background: linear-gradient(#bdbdbd 54px, #fdfdfd 54px);

	span:first-child {
		margin-top: -11px;
	}
`;

const VUnit = styled.span`
	flex: none;
	display: flex;
	align-items: center;
	justify-content: center;
	width: 14px;
	height: calc(53px / 2);
	writing-mode: vertical-rl;
	transform: rotate(180deg);
	font-size: 10px;
	line-height: 14px;
	background:
		linear-gradient(${ticks}, ${ticks}) 50% 0 / 5px 1px no-repeat,
		linear-gradient(${ticks}, ${ticks}) 50% 20% / 2px 1px no-repeat,
		linear-gradient(${ticks}, ${ticks}) 50% 80% / 2px 1px no-repeat;
`;

const RowMark = styled.i`
	position: absolute;
	left: 0;
	width: 14px;
	height: 5px;
	background: #bdbdbd;
`;

const Canvas = styled.div`
	display: flex;
	min-height: 0;
	overflow: hidden;
`;

const Page = styled.article`
	flex: 1;
	max-width: 557px;
	margin: 2px auto 0;
	padding: 40px 62px 0 92px;
	font-family: ${arial};
	font-size: 11px;
	line-height: 14px;
	color: #222;
	background: #fdfdfd;
	border: 1px solid #c8c8c8;
	border-bottom: 0;
`;

const Heading = styled.p`
	margin: 0 0 11px 6px;
	font-weight: 700;
	color: #999;
`;

// misspelled word
const Sp = styled.span`
	padding-bottom: 1px;
	background: repeating-linear-gradient(135deg, #e0505c 0 1px, transparent 1px 2px) 0 100% / 100% 2px no-repeat;
`;

const TableFrame = styled.div`
	position: relative;
`;

const MoveHandle = styled.span`
	position: absolute;
	left: -13px;
	top: -13px;
	display: flex;
	align-items: center;
	justify-content: center;
	width: 13px;
	height: 13px;
	border: 1px solid #aaa;
`;

const ResizeHandle = styled.span`
	position: absolute;
	right: -8px;
	bottom: -8px;
	width: 8px;
	height: 8px;
	background: #fff;
	border: 1px solid #aaa;
`;

const DocTable = styled.table`
	width: 100%;
	table-layout: fixed;
	border-collapse: collapse;

	td {
		position: relative;
		padding: 2px 0 0 5px;
		vertical-align: top;
		border: 1px solid #c6c6c6;
	}
`;

const DocRow = styled.tr`
	height: ${(p) => p.$height}px;
`;

const DocHead = styled.td`
	font-weight: 700;
	color: #111;
	text-align: ${(p) => (p.$left ? 'left' : 'center')};
`;

const Centered = styled.td`
	text-align: center;
`;

const Remark = styled.td`
	font-style: italic;
`;

const TextCursor = styled(Svg)`
	position: absolute;
	left: -2px;
	top: 0;
`;

const VScroll = styled.div`
	grid-column: 2;
	grid-row: 1 / 3;
	display: flex;
	flex-direction: column;
	padding-top: 1px;
	background: #dedede;
`;

const VTrack = styled.div`
	display: flex;
	flex: 1;
	padding-top: 121px;
`;

const VThumb = styled.i`
	width: 17px;
	height: 76px;
	background: #fdfdfd;
	border: 1px solid #b5b5b5;
`;

const BackPane = styled.section`
	display: flex;
	flex-direction: column;
	min-height: 0;
	overflow: hidden;
	background: #e6e6e6;
`;

const BackHeader = styled.div`
	flex: none;
	height: 57px;
	padding: 38px 0 0 8px;
	color: #fff;
	background: ${WORD};
`;

const BackRibbon = styled.div`
	flex: none;
	height: 88px;
	padding: 6px 0 0 4px;
	background: #f1f1f1;

	svg {
		margin: 0 0 3px 8px;
	}
`;

const BackBody = styled.div`
	flex: 1;
	min-height: 0;
	padding-top: 3px;
	display: flex;
	flex-direction: column;

	${TabSelector} {
		margin-left: 2px;
	}
`;

const BackRuler = styled.div`
	flex: 1;
	min-height: 0;
	display: flex;
	flex-direction: column;
	width: 15px;
	margin: 4px 0 0 3px;
	overflow: hidden;
	background: #fdfdfd;
`;

const BackStatus = styled.div`
	flex: none;
	height: 21px;
	padding: 3px 0 0 5px;
	font-size: 10px;
	background: #f1f1f1;
	border-top: 1px solid #dcdcdc;
`;

const Bar = styled.footer`
	display: flex;
	flex: none;
	height: 32px;
	color: #f3f3f3;
	background: #464646;
`;

const Pinned = styled.div`
	display: flex;
	padding: 2px 1px 0 0;
`;

const PinButton = styled.button`
	display: flex;
	align-items: center;
	justify-content: center;
	width: 36px;
`;

const Tasks = styled.div`
	display: flex;
	flex: 1;
	min-width: 0;
`;

const Task = styled.button`
	display: flex;
	flex: 1;
	align-items: center;
	gap: 4px;
	min-width: 0;
	margin: 0 4px;
	padding: 5px 0 0 4px;
	overflow: hidden;
	white-space: nowrap;
	border-bottom: 3px solid #5fa8e0;

	${(p) =>
		p.$active &&
		css`
			flex: 1 0 8px;
			margin: 0;
			padding-left: 8px;
			background: #6d6d6d;
		`}
`;

const LetterBox = styled.span`
	display: flex;
	flex: none;
	align-items: center;
	width: 16px;
	height: 16px;

	b {
		width: 9px;
		font-size: 8px;
		line-height: 14px;
		text-align: center;
		color: #fff;
		background: ${(p) => p.$color};
	}
`;

const Tray = styled.div`
	display: flex;
	flex: none;
	align-items: center;
	gap: 16px;
	margin-left: 19px;
	padding: 2px 20px 0 0;
	border-right: 5px solid #505050;
	font-size: 12px;
`;
